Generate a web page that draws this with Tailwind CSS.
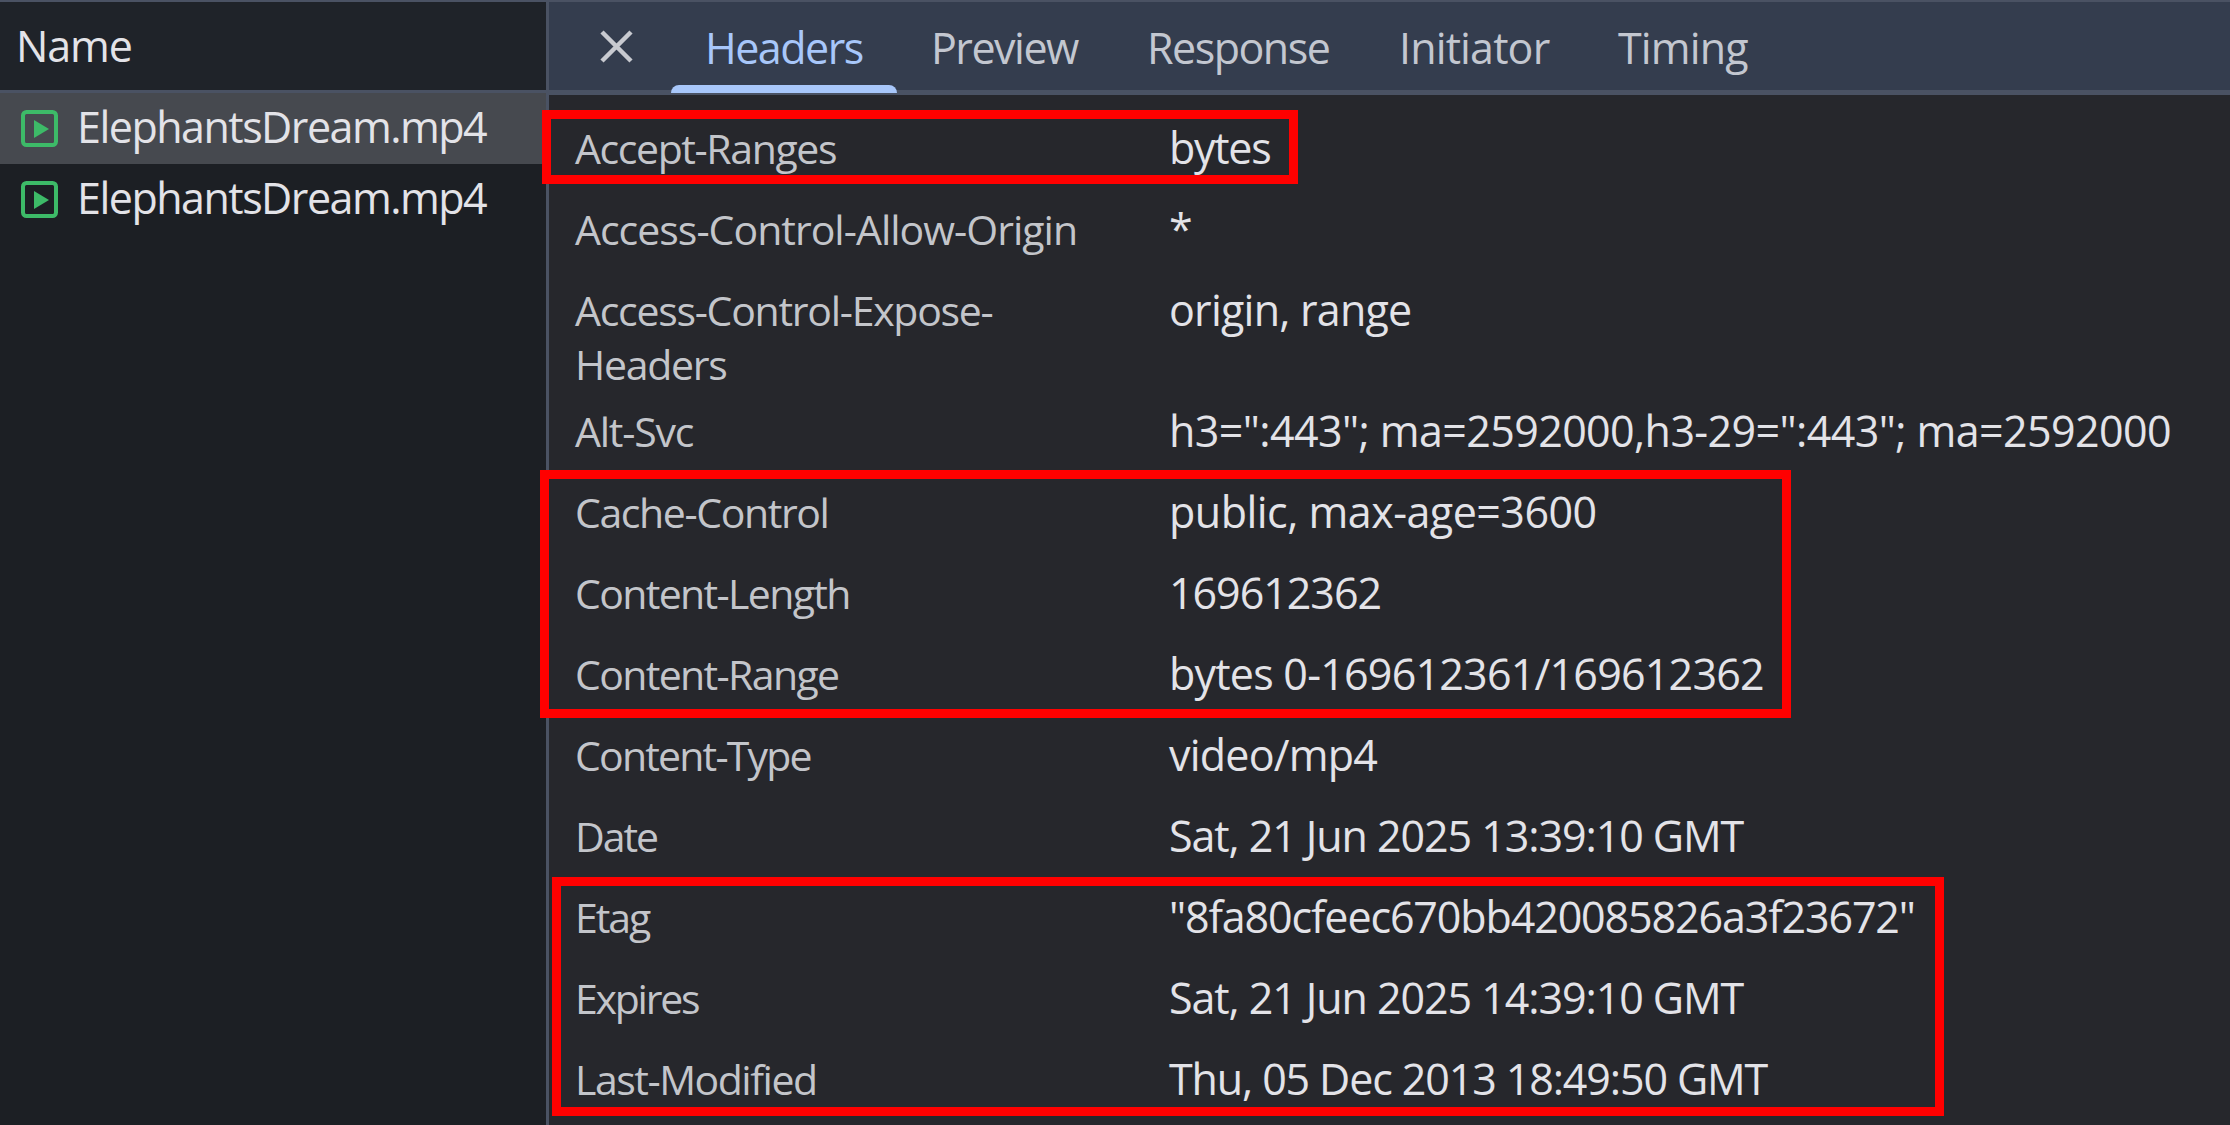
<!DOCTYPE html>
<html lang="en">

<head>
  <meta charset="UTF-8">
  <title>Network - Headers</title>
  <script src="https://cdn.jsdelivr.net/npm/@tailwindcss/browser@4"></script>
</head>

<body class="m-0 w-[2230px] h-[1125px] overflow-hidden bg-[#26272c] font-['Open_Sans',sans-serif] text-[43px] tracking-[-0.035em]">
  <div class="relative flex w-[2230px] h-[1125px] overflow-hidden border-t-2 border-[#4a5263]">
    <!-- request list -->
    <div class="w-[546px] shrink-0 bg-[#1c1f24] border-r-[3px] border-[#4a5263] box-content">
      <div class="h-[88px] flex items-center pl-[16px] bg-[#1f2329] text-[#e3e3e8] border-b-[3px] border-[#4a5263] box-content tracking-[-0.026em]">Name</div>
      <div class="h-[71px] flex items-center pl-[21px] pb-[2px] gap-[19px] bg-[#46494f] text-[#e3e3e8]">
        <svg class="w-[37px] h-[37px] shrink-0 mt-[2px]" viewBox="0 0 37 37" fill="none">
          <rect x="2" y="2" width="33" height="33" rx="3.5" stroke="#3dba68" stroke-width="4" />
          <path d="M13 10 L28 19 L13 28 Z" fill="#3dba68" />
        </svg>
        <span>ElephantsDream.mp4</span>
      </div>
      <div class="h-[71px] flex items-center pl-[21px] pb-[2px] gap-[19px] text-[#e3e3e8]">
        <svg class="w-[37px] h-[37px] shrink-0 mt-[2px]" viewBox="0 0 37 37" fill="none">
          <rect x="2" y="2" width="33" height="33" rx="3.5" stroke="#3dba68" stroke-width="4" />
          <path d="M13 10 L28 19 L13 28 Z" fill="#3dba68" />
        </svg>
        <span>ElephantsDream.mp4</span>
      </div>
    </div>

    <!-- details -->
    <div class="flex-1 min-w-0">
      <div class="relative h-[88px] flex items-center bg-[#343d4e] border-b-[5px] border-[#4a5263] box-content text-[#c3c7d0]">
        <svg class="ml-[51px] mr-[72px] w-[33px] h-[33px] shrink-0" viewBox="0 0 33 33" fill="none">
          <path d="M2 2 L31 31 M31 2 L2 31" stroke="#c8cad0" stroke-width="4.5" />
        </svg>
        <span class="w-[226px] pt-[5px] text-[#a8c7fa]">Headers</span>
        <span class="w-[216px] pt-[5px]">Preview</span>
        <span class="w-[252px] pt-[5px]">Response</span>
        <span class="w-[219px] pt-[5px] tracking-[-0.02em]">Initiator</span>
        <span class="pt-[5px] tracking-[-0.02em]">Timing</span>
        <div class="absolute left-[122px] bottom-[-3px] w-[226px] h-[8px] rounded-t-[8px] bg-[#a8c7fa]"></div>
      </div>

      <div class="pl-[26px] pt-[13px] text-[#e3e3e8] tracking-[-0.018em]">
        <div class="flex h-[81px] items-center"><span class="w-[594px] shrink-0 text-[41px] tracking-[-0.034em] text-[#c3c5ca]">Accept-Ranges</span><span class="tracking-[-0.03em]">bytes</span></div>
        <div class="flex h-[81px] items-center"><span class="w-[594px] shrink-0 text-[41px] tracking-[-0.024em] text-[#c3c5ca]">Access-Control-Allow-Origin</span><span>*</span></div>
        <div class="flex h-[121px] pt-[13px] leading-[54px]"><span class="w-[594px] shrink-0 pr-[60px] text-[41px] tracking-[-0.031em] text-[#c3c5ca]">Access-Control-Expose-<br>Headers</span><span>origin, range</span></div>
        <div class="flex h-[81px] items-center"><span class="w-[594px] shrink-0 text-[41px] tracking-[-0.03em] text-[#c3c5ca]">Alt-Svc</span><span class="whitespace-nowrap tracking-[-0.014em]">h3=":443"; ma=2592000,h3-29=":443"; ma=2592000</span></div>
        <div class="flex h-[81px] items-center"><span class="w-[594px] shrink-0 text-[41px] tracking-[-0.034em] text-[#c3c5ca]">Cache-Control</span><span class="tracking-[-0.012em]">public, max-age=3600</span></div>
        <div class="flex h-[81px] items-center"><span class="w-[594px] shrink-0 text-[41px] tracking-[-0.04em] text-[#c3c5ca]">Content-Length</span><span class="tracking-[-0.024em]">169612362</span></div>
        <div class="flex h-[81px] items-center"><span class="w-[594px] shrink-0 text-[41px] tracking-[-0.04em] text-[#c3c5ca]">Content-Range</span><span>bytes 0-169612361/169612362</span></div>
        <div class="flex h-[81px] items-center"><span class="w-[594px] shrink-0 text-[41px] tracking-[-0.044em] text-[#c3c5ca]">Content-Type</span><span>video/mp4</span></div>
        <div class="flex h-[81px] items-center"><span class="w-[594px] shrink-0 text-[41px] tracking-[-0.05em] text-[#c3c5ca]">Date</span><span class="tracking-[-0.025em]">Sat, 21 Jun 2025 13:39:10 GMT</span></div>
        <div class="flex h-[81px] items-center"><span class="w-[594px] shrink-0 text-[41px] tracking-[-0.05em] text-[#c3c5ca]">Etag</span><span class="tracking-[-0.026em]">"8fa80cfeec670bb420085826a3f23672"</span></div>
        <div class="flex h-[81px] items-center"><span class="w-[594px] shrink-0 text-[41px] tracking-[-0.055em] text-[#c3c5ca]">Expires</span><span class="tracking-[-0.025em]">Sat, 21 Jun 2025 14:39:10 GMT</span></div>
        <div class="flex h-[81px] items-center"><span class="w-[594px] shrink-0 text-[41px] tracking-[-0.036em] text-[#c3c5ca]">Last-Modified</span><span class="tracking-[-0.026em]">Thu, 05 Dec 2013 18:49:50 GMT</span></div>
      </div>
    </div>

    <!-- red annotation boxes -->
    <div class="absolute left-[542px] top-[108px] w-[756px] h-[74px] border-[9px] border-[#ff0000]"></div>
    <div class="absolute left-[540px] top-[468px] w-[1251px] h-[248px] border-[9px] border-[#ff0000]"></div>
    <div class="absolute left-[552px] top-[875px] w-[1392px] h-[239px] border-[9px] border-[#ff0000]"></div>
  </div>
</body>

</html>
